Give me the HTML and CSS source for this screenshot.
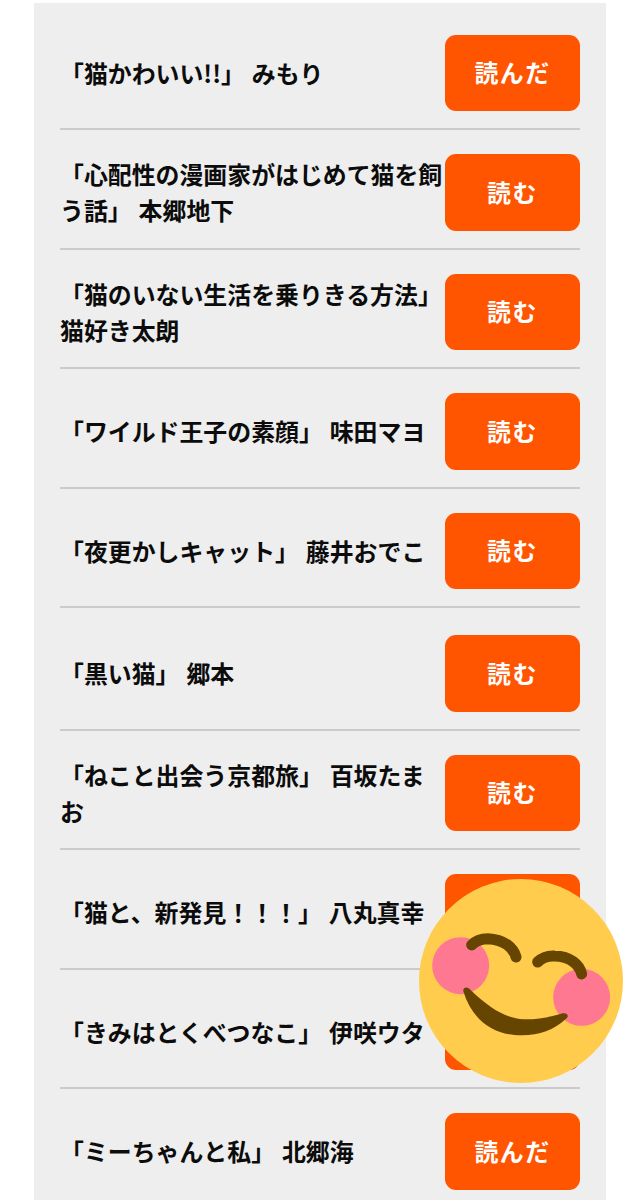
FILE: index.html
```html
<!DOCTYPE html>
<html lang="ja">
<head>
    <meta charset="UTF-8">
    <meta name="viewport" content="width=device-width, initial-scale=1.0">
    <title>猫の本リスト</title>
    <link rel="stylesheet" href="styles.css">
</head>
<body>
    <ul class="book-list">
        <li class="book">
            <p class="book-title">「猫かわいい!!」 みもり</p>
            <button type="button" class="btn">読んだ</button>
        </li>
        <li class="book">
            <p class="book-title">「心配性の漫画家がはじめて猫を飼う話」 本郷地下</p>
            <button type="button" class="btn">読む</button>
        </li>
        <li class="book">
            <p class="book-title">「猫のいない生活を乗りきる方法」 猫好き太朗</p>
            <button type="button" class="btn">読む</button>
        </li>
        <li class="book">
            <p class="book-title">「ワイルド王子の素顔」 味田マヨ</p>
            <button type="button" class="btn">読む</button>
        </li>
        <li class="book">
            <p class="book-title">「夜更かしキャット」 藤井おでこ</p>
            <button type="button" class="btn">読む</button>
        </li>
        <li class="book book-spaced">
            <p class="book-title">「黒い猫」 郷本</p>
            <button type="button" class="btn">読む</button>
        </li>
        <li class="book">
            <p class="book-title">「ねこと出会う京都旅」 百坂たまお</p>
            <button type="button" class="btn">読む</button>
        </li>
        <li class="book">
            <p class="book-title">「猫と、新発見！！！」 八丸真幸</p>
            <button type="button" class="btn"></button>
        </li>
        <li class="book">
            <p class="book-title">「きみはとくべつなこ」 伊咲ウタ</p>
            <button type="button" class="btn"></button>
        </li>
        <li class="book">
            <p class="book-title">「ミーちゃんと私」 北郷海</p>
            <button type="button" class="btn">読んだ</button>
        </li>
    </ul>

    <!-- smile sticker -->
    <svg class="sticker" viewBox="57 56 612 612" aria-hidden="true">
        <circle cx="363" cy="362" r="306" fill="#ffcc4d"/>
        <circle cx="182" cy="316" r="85.5" fill="#ff7892"/>
        <circle cx="545" cy="411" r="85.5" fill="#ff7892"/>
        <g fill="none" stroke="#664500" stroke-width="33" stroke-linecap="round">
            <path d="M215 254C228 240 245 235 264 235C312 237 340 262 348 290"/>
            <path d="M413 305C428 290 445 286 464 287C510 288 538 312 545 341"/>
        </g>
        <path fill="#664500" d="M190 393C188 380 202 377 211 388C270 446 325 476 370 477C410 478 445 472 488 459C500 456 508 465 500 474C460 510 420 525 365 525C275 525 215 475 190 393Z"/>
    </svg>
</body>
</html>
```
FILE: styles.css
```css
* {
    box-sizing: border-box;
}

body {
    margin: 0;
    height: 1200px;
    overflow: hidden;
    position: relative;
    background: #fff;
    color: #0c0c0c;
    font-family: "Noto Sans CJK JP", sans-serif;
}

.book-list {
    list-style: none;
    width: 572px;
    margin: 2.5px 0 0 34px;
    padding: 8.2px 26px 0;
    background: #eee;
}

.book {
    display: flex;
    align-items: center;
    height: 119.5px;
    padding-top: 7px;
    border-bottom: 2px solid #cbcbcb;
}

.book-spaced {
    height: 122.5px;
    padding-top: 10px;
}

.book-title {
    flex: 0 0 385px;
    margin: 0;
    font-size: 23.9px;
    font-weight: 600;
    line-height: 36px;
    word-spacing: 1.5px;
    text-spacing-trim: space-all;
}

.btn {
    flex: 1;
    height: 76.7px;
    padding: 0 0 2px;
    border: none;
    border-radius: 11px;
    background: #ff5500;
    color: #fff;
    font-family: inherit;
    font-size: 23.9px;
    font-weight: 600;
    letter-spacing: 1.5px;
    cursor: pointer;
}

.sticker {
    position: absolute;
    left: 419px;
    top: 878.7px;
    width: 204px;
    height: 204px;
}
```
